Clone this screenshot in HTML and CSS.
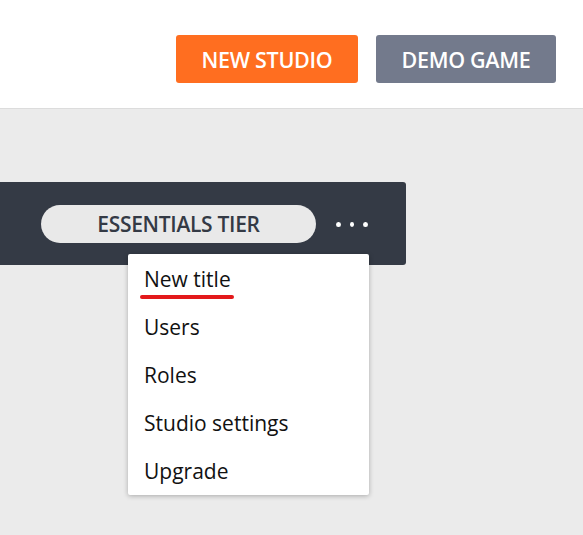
FILE: index.html
```html
<!DOCTYPE html>
<html>
<head>
<meta charset="utf-8">
<link rel="stylesheet" href="styles.css">
</head>
<body>
<header class="topbar">
  <button class="btn btn-orange">NEW STUDIO</button>
  <button class="btn btn-gray">DEMO GAME</button>
</header>
<main class="content">
  <div class="studio">
    <div class="studio-bar">
      <span class="tier">ESSENTIALS TIER</span>
      <span class="dots"><i></i><i></i><i></i></span>
    </div>
    <ul class="menu">
      <li class="menu-item active"><span>New title</span></li>
      <li class="menu-item"><span>Users</span></li>
      <li class="menu-item"><span>Roles</span></li>
      <li class="menu-item"><span>Studio settings</span></li>
      <li class="menu-item"><span>Upgrade</span></li>
    </ul>
  </div>
</main>
</body>
</html>
```
FILE: styles.css
```css
* { box-sizing: border-box; }
html, body { margin: 0; padding: 0; }
body {
  font-family: "Open Sans", "Liberation Sans", sans-serif;
  background: #ebebeb;
  width: 583px;
  height: 535px;
  overflow: hidden;
}
.topbar {
  height: 109px;
  background: #ffffff;
  border-bottom: 1px solid #dcdcdc;
  display: flex;
  justify-content: flex-end;
  align-items: flex-start;
  gap: 18px;
  padding: 35px 27px 0 0;
}
.btn {
  font-family: inherit;
  font-size: 21.5px;
  font-weight: 600;
  color: #ffffff;
  border: none;
  border-radius: 3px;
  height: 48px;
  padding: 0;
  display: flex;
  align-items: center;
  justify-content: center;
  letter-spacing: -0.3px;
}
.btn-orange { background: #ff6e20; width: 182px; }
.btn-gray { background: #737a8c; width: 180px; }
.content {
  padding-top: 73px;
}
.studio {
  position: relative;
}
.studio-bar {
  width: 406px;
  height: 83px;
  background: #343a45;
  border-radius: 0 3px 3px 0;
  display: flex;
  align-items: center;
  justify-content: flex-end;
  padding-right: 38px;
}
.tier {
  width: 275px;
  height: 38px;
  border-radius: 19px;
  background: #e9e9e9;
  color: #343a45;
  font-size: 21px;
  font-weight: 600;
  display: flex;
  align-items: center;
  justify-content: center;
  margin-right: 20px;
  letter-spacing: -0.3px;
}
.dots {
  display: flex;
  gap: 9px;
  width: 32px;
  padding-top: 2px;
}
.dots i {
  width: 5px;
  height: 5px;
  border-radius: 50%;
  background: #ffffff;
  display: block;
}
.menu {
  position: absolute;
  left: 128px;
  top: 72px;
  width: 241px;
  margin: 0;
  padding: 1px 0 0;
  list-style: none;
  background: #ffffff;
  border-radius: 2px;
  box-shadow: 0 1px 5px rgba(0,0,0,0.28);
}
.menu-item {
  height: 48px;
  line-height: 48px;
  padding-left: 16px;
  font-size: 21px;
  color: #111111;
}
.menu-item span {
  position: relative;
  display: inline-block;
  line-height: 46px;
}
.menu-item.active span::after {
  content: "";
  position: absolute;
  left: -4px;
  right: -3px;
  bottom: 3px;
  height: 4px;
  border-radius: 2px;
  background: #e3191b;
}
```
